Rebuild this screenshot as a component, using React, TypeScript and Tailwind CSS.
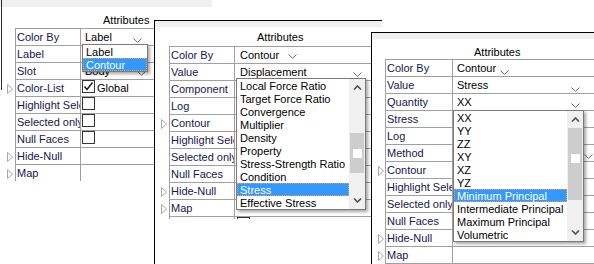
import React from "react";

function Chevron({ cls }: { cls: string }) {
  return (
    <svg width="9" height="5" viewBox="0 0 9 5" className={`shrink-0 ${cls}`}>
      <polyline points="0.5,0.5 4.5,4.3 8.5,0.5" fill="none" stroke="#6a6a6a" strokeWidth="1" />
    </svg>
  );
}

function Tri() {
  return (
    <svg width="6" height="10" viewBox="0 0 6 10">
      <polygon points="0.5,0.5 5.5,5 0.5,9.5" fill="white" stroke="#a8a8a8" strokeWidth="1" />
    </svg>
  );
}

function Box({ checked }: { checked?: boolean }) {
  return (
    <div className="w-[13px] h-[13px] border border-[#333333] bg-white shrink-0 mt-[0px]">
      {checked && (
        <svg width="11" height="11" viewBox="0 0 11 11">
          <polyline points="1.5,5.5 4,8.5 9.5,1.5" fill="none" stroke="#222222" strokeWidth="1.5" />
        </svg>
      )}
    </div>
  );
}

function UpArrow() {
  return (
    <svg width="9" height="5" viewBox="0 0 9 5">
      <polyline points="1,4.5 4.5,1 8,4.5" fill="none" stroke="#505050" strokeWidth="1.6" />
    </svg>
  );
}
function DownArrow() {
  return (
    <svg width="9" height="5" viewBox="0 0 9 5">
      <polyline points="1,0.5 4.5,4 8,0.5" fill="none" stroke="#505050" strokeWidth="1.6" />
    </svg>
  );
}

type RowProps = {
  label: string;
  first?: boolean;
  tri?: boolean;
  gutter: string;
  col1: string;
  pad?: string;
  children?: React.ReactNode;
};

function Row({ label, first, tri, gutter, col1, pad = "pl-[4px]", children }: RowProps) {
  return (
    <div className={`flex ${first ? "h-[18px]" : "h-[17px]"}`}>
      <div className={`${gutter} shrink-0 flex items-center justify-end`}>{tri && <Tri />}</div>
      <div className={`flex flex-1 min-w-0 border-l border-b border-[#a0a0a0] ${first ? "border-t" : ""}`}>
        <div
          className={`${col1} shrink-0 border-r border-[#a0a0a0] pl-[1px] overflow-hidden whitespace-nowrap leading-[16px] text-[#16164e]`}
        >
          {label}
        </div>
        <div className={`flex-1 flex items-start ${pad} whitespace-nowrap leading-[16px] overflow-hidden`}>
          {children}
        </div>
      </div>
    </div>
  );
}

function Item({ text, sel }: { text: string; sel?: boolean }) {
  if (sel) {
    return (
      <div className="h-[13px] leading-[13px] pl-[2px] bg-[#3399ff] text-white border border-dotted border-[#f0a040] whitespace-nowrap">
        {text}
      </div>
    );
  }
  return <div className="h-[13px] leading-[15px] pl-[3px] whitespace-nowrap">{text}</div>;
}

function P1() {
  const g = "w-[15px] pr-[2px]";
  const c = "w-[65px]";
  return (
    <div className="absolute left-0 top-0 w-[212px] h-[181px] overflow-hidden bg-white">
      <div className="absolute left-[1px] top-0 w-[1px] h-[90px] bg-[#2a2a2a]" />
      <div className="h-[7px] bg-[#f0f0f0]" />
      <div className="h-[21px] pt-[7px] pl-[103px] leading-[13px]">Attributes</div>
      <Row first label="Color By" gutter={g} col1={c}>
        <span className="w-[48px] shrink-0">Label</span>
        <Chevron cls="mt-[9px]" />
      </Row>
      <Row label="Label" gutter={g} col1={c} />
      <Row label="Slot" gutter={g} col1={c}>
        <span className="w-[52px] shrink-0">Body</span>
        <Chevron cls="mt-[8px]" />
      </Row>
      <Row label="Color-List" tri gutter={g} col1={c} pad="pl-[1px]">
        <Box checked />
        <span className="ml-[2px]">Global</span>
      </Row>
      <Row label="Highlight Selected" gutter={g} col1={c} pad="pl-[1px]">
        <Box />
      </Row>
      <Row label="Selected only" gutter={g} col1={c} pad="pl-[1px]">
        <Box />
      </Row>
      <Row label="Null Faces" gutter={g} col1={c} pad="pl-[1px]">
        <Box />
      </Row>
      <Row label="Hide-Null" tri gutter={g} col1={c} />
      <Row label="Map" tri gutter={g} col1={c} />
      <div className="absolute left-[82px] top-[44px] w-[66px] bg-white border border-[#7a7a7a] shadow-[2px_2px_3px_rgba(0,0,0,0.35)]">
        <Item text="Label" />
        <Item text="Contour" sel />
      </div>
    </div>
  );
}

function P2() {
  const g = "w-[14px] pr-[2px]";
  const c = "w-[65px]";
  const items = [
    "Local Force Ratio",
    "Target Force Ratio",
    "Convergence",
    "Multiplier",
    "Density",
    "Property",
    "Stress-Strength Ratio",
    "Condition",
    "Stress",
    "Effective Stress",
  ];
  return (
    <div className="absolute left-[154px] top-[20px] w-[228px] h-[244px] border-l border-t border-black bg-white">
      <div className="h-[198px] overflow-hidden">
        <div className="h-[6px] bg-[#f0f0f0]" />
        <div className="h-[19px] pt-[4px] pl-[102px] leading-[13px]">Attributes</div>
        <Row first label="Color By" gutter={g} col1={c} pad="pl-[5px]">
          <span className="w-[48px] shrink-0">Contour</span>
          <Chevron cls="mt-[7px]" />
        </Row>
        <Row label="Value" gutter={g} col1={c} pad="pl-[5px]">
          <span className="w-[113px] shrink-0">Displacement</span>
          <Chevron cls="mt-[8px]" />
        </Row>
        <Row label="Component" gutter={g} col1={c} />
        <Row label="Log" gutter={g} col1={c} pad="pl-[1px]">
          <Box />
        </Row>
        <Row label="Contour" tri gutter={g} col1={c} />
        <Row label="Highlight Selected" gutter={g} col1={c} pad="pl-[1px]">
          <Box />
        </Row>
        <Row label="Selected only" gutter={g} col1={c} pad="pl-[1px]">
          <Box />
        </Row>
        <Row label="Null Faces" gutter={g} col1={c} pad="pl-[1px]">
          <Box />
        </Row>
        <Row label="Hide-Null" tri gutter={g} col1={c} />
        <Row label="Map" tri gutter={g} col1={c} />
        <Row label="" gutter={g} col1={c} pad="pl-[2px]">
          <Box />
        </Row>
      </div>
      <div className="absolute left-[81px] top-[57px] w-[130px] flex bg-white border border-[#7a7a7a] shadow-[2px_2px_3px_rgba(0,0,0,0.35)]">
        <div className="flex-1 min-w-0">
          {items.map((t) => (
            <Item key={t} text={t} sel={t === "Stress"} />
          ))}
        </div>
        <div className="w-[16px] shrink-0 bg-[#f0f0f0] flex flex-col">
          <div className="h-[17px] flex justify-center pt-[6px]">
            <UpArrow />
          </div>
          <div className="h-[37px]" />
          <div className="h-[40px] mx-[1px] bg-[#cdcdcd] flex justify-center items-center">
            <div className="w-[9px] h-[9px] bg-white" />
          </div>
          <div className="flex-1" />
          <div className="h-[17px] flex justify-center pt-[6px]">
            <DownArrow />
          </div>
        </div>
      </div>
    </div>
  );
}

function P3() {
  const g = "w-[13px] pr-[1px]";
  const c = "w-[67px]";
  const items = [
    "XX",
    "YY",
    "ZZ",
    "XY",
    "XZ",
    "YZ",
    "Minimum Principal",
    "Intermediate Principal",
    "Maximum Principal",
    "Volumetric",
  ];
  return (
    <div className="absolute left-[371px] top-[32px] w-[223px] h-[232px] border-l border-t border-black bg-white">
      <div className="h-[231px] overflow-hidden">
        <div className="h-[6px] bg-[#f0f0f0]" />
        <div className="h-[20px] pt-[7px] pl-[102px] leading-[13px]">Attributes</div>
        <Row first label="Color By" gutter={g} col1={c}>
          <span className="w-[43px] shrink-0">Contour</span>
          <Chevron cls="mt-[10px]" />
        </Row>
        <Row label="Value" gutter={g} col1={c}>
          <span className="w-[114px] shrink-0">Stress</span>
          <Chevron cls="mt-[10px]" />
        </Row>
        <Row label="Quantity" gutter={g} col1={c}>
          <span className="w-[114px] shrink-0">XX</span>
          <Chevron cls="mt-[9px]" />
        </Row>
        <Row label="Stress" gutter={g} col1={c} />
        <Row label="Log" gutter={g} col1={c} pad="pl-[1px]">
          <Box />
        </Row>
        <Row label="Method" gutter={g} col1={c}>
          <span className="w-[127px] shrink-0" />
          <Chevron cls="mt-[9px]" />
        </Row>
        <Row label="Contour" tri gutter={g} col1={c} />
        <Row label="Highlight Selected" gutter={g} col1={c} pad="pl-[1px]">
          <Box />
        </Row>
        <Row label="Selected only" gutter={g} col1={c} pad="pl-[1px]">
          <Box />
        </Row>
        <Row label="Null Faces" gutter={g} col1={c} pad="pl-[1px]">
          <Box />
        </Row>
        <Row label="Hide-Null" tri gutter={g} col1={c} />
        <Row label="Map" tri gutter={g} col1={c} />
      </div>
      <div className="absolute left-[81px] top-[77px] w-[131px] flex bg-white border border-[#7a7a7a] shadow-[2px_2px_3px_rgba(0,0,0,0.35)]">
        <div className="flex-1 min-w-0">
          {items.map((t) => (
            <Item key={t} text={t} sel={t === "Minimum Principal"} />
          ))}
        </div>
        <div className="w-[16px] shrink-0 bg-[#f0f0f0] flex flex-col">
          <div className="h-[17px] flex justify-center pt-[6px]">
            <UpArrow />
          </div>
          <div className="h-[72px] mx-[1px] bg-[#cdcdcd] flex justify-center pt-[26px]">
            <div className="w-[9px] h-[9px] bg-white" />
          </div>
          <div className="flex-1" />
          <div className="h-[17px] flex justify-center pt-[6px]">
            <DownArrow />
          </div>
        </div>
      </div>
    </div>
  );
}

export default function App() {
  return (
    <div className="relative w-[594px] h-[264px] overflow-hidden bg-white text-black text-[11px] font-['Liberation_Sans',Arial,sans-serif]">
      <P1 />
      <P2 />
      <P3 />
    </div>
  );
}
